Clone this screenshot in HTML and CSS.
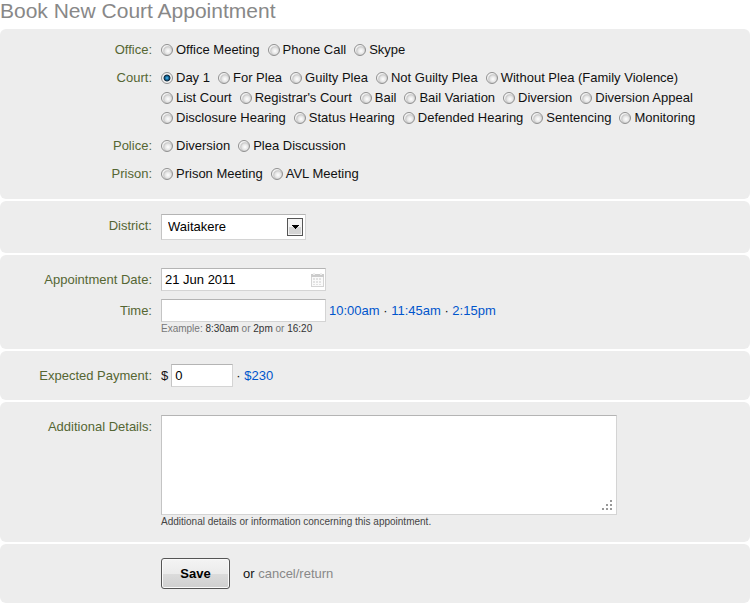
FILE: index.html
```
<!DOCTYPE html>
<html lang="en">

<head>
    <meta charset="utf-8">
    <title>Book New Court Appointment</title>
    <meta name="viewport" content="width=device-width, initial-scale=1">
    <link rel="stylesheet" href="styles.css">
</head>

<body>
    <h1>Book New Court Appointment</h1>
    <form class="booking">
        <div class="panel panel-types">
            <div class="row" role="group" aria-labelledby="lbl-office">
                <span class="label" id="lbl-office">Office:</span>
                <div class="options">
                    <label><input type="radio" name="type">Office Meeting</label>
                    <label><input type="radio" name="type">Phone Call</label>
                    <label><input type="radio" name="type">Skype</label>
                </div>
            </div>
            <div class="row" role="group" aria-labelledby="lbl-court">
                <span class="label" id="lbl-court">Court:</span>
                <div class="options">
                    <label><input type="radio" name="type" checked>Day 1</label>
                    <label><input type="radio" name="type">For Plea</label>
                    <label><input type="radio" name="type">Guilty Plea</label>
                    <label><input type="radio" name="type">Not Guilty Plea</label>
                    <label><input type="radio" name="type">Without Plea (Family Violence)</label>
                    <label><input type="radio" name="type">List Court</label>
                    <label><input type="radio" name="type">Registrar's Court</label>
                    <label><input type="radio" name="type">Bail</label>
                    <label><input type="radio" name="type">Bail Variation</label>
                    <label><input type="radio" name="type">Diversion</label>
                    <label><input type="radio" name="type">Diversion Appeal</label>
                    <label><input type="radio" name="type">Disclosure Hearing</label>
                    <label><input type="radio" name="type">Status Hearing</label>
                    <label><input type="radio" name="type">Defended Hearing</label>
                    <label><input type="radio" name="type">Sentencing</label>
                    <label><input type="radio" name="type">Monitoring</label>
                </div>
            </div>
            <div class="row" role="group" aria-labelledby="lbl-police">
                <span class="label" id="lbl-police">Police:</span>
                <div class="options">
                    <label><input type="radio" name="type">Diversion</label>
                    <label><input type="radio" name="type">Plea Discussion</label>
                </div>
            </div>
            <div class="row" role="group" aria-labelledby="lbl-prison">
                <span class="label" id="lbl-prison">Prison:</span>
                <div class="options">
                    <label><input type="radio" name="type">Prison Meeting</label>
                    <label><input type="radio" name="type">AVL Meeting</label>
                </div>
            </div>
        </div>

        <div class="panel">
            <div class="row">
                <label class="label" for="district">District:</label>
                <div class="field select-box">
                    <select id="district">
                        <option>Waitakere</option>
                    </select>
                    <svg class="arrow" width="16" height="18" viewBox="0 0 16 18" aria-hidden="true">
                        <rect x="0.5" y="0.5" width="15" height="17" fill="#f4f4f4" stroke="#555" />
                        <rect x="2" y="9" width="12" height="7" fill="#d4d4d4" />
                        <path d="M5 7h7v1h-1v1h-1v1H9v1H8v-1H7V9H6V8H5z" fill="#000" />
                    </svg>
                </div>
            </div>
        </div>

        <div class="panel">
            <div class="row">
                <label class="label" for="date">Appointment Date:</label>
                <div class="field date-box">
                    <input class="text" type="text" id="date" value="21 Jun 2011">
                    <svg class="calendar" width="13" height="14" viewBox="0 0 13 14" aria-hidden="true">
                        <rect x="0.5" y="1.5" width="12" height="12" fill="#fafafa" stroke="#d4d4d4" />
                        <path d="M0 1h13v3H0z" fill="#ccc" />
                        <path d="M2 0h2v2H2zM9 0h2v2H9z" fill="#eee" />
                        <path d="M2 5h2v2H2zM5 5h2v2H5zM8 5h2v2H8zM2 8h2v2H2zM5 8h2v2H5zM8 8h2v2H8zM2 11h2v1H2zM5 11h2v1H5zM8 11h2v1H8z" fill="#e2e2e2" />
                    </svg>
                </div>
            </div>
            <div class="row">
                <label class="label" for="time">Time:</label>
                <div class="field">
                    <div class="line">
                        <input class="text" type="text" id="time">
                        <span class="quick"><a href="#">10:00am</a> · <a href="#">11:45am</a> · <a href="#">2:15pm</a></span>
                    </div>
                    <p class="hint example">Example: <b>8:30am</b> or <b>2pm</b> or <b>16:20</b></p>
                </div>
            </div>
        </div>

        <div class="panel">
            <div class="row">
                <label class="label" for="payment">Expected Payment:</label>
                <div class="field line">
                    <span>$</span>
                    <input class="text amount" type="text" id="payment" value="0">
                    <span class="quick">· <a href="#">$230</a></span>
                </div>
            </div>
        </div>

        <div class="panel">
            <div class="row">
                <label class="label" for="details">Additional Details:</label>
                <div class="field details">
                    <div class="details-box">
                        <textarea id="details"></textarea>
                        <svg class="grip" width="10" height="10" viewBox="0 0 10 10" aria-hidden="true">
                            <path d="M8 0h2v2H8zM4 4h2v2H4zM8 4h2v2H8zM0 8h2v2H0zM4 8h2v2H4zM8 8h2v2H8z" fill="#999" />
                        </svg>
                    </div>
                    <p class="hint">Additional details or information concerning this appointment.</p>
                </div>
            </div>
        </div>

        <div class="panel actions">
            <button type="button">Save</button>
            <span>or <a class="cancel" href="#">cancel/return</a></span>
        </div>
    </form>
</body>

</html>
```
FILE: styles.css
```
body {
    margin: 0;
    background: #fff;
    color: #111;
    font-family: "Liberation Sans", Arial, sans-serif;
    font-size: 13px;
    line-height: 20px;
}

h1 {
    margin: 0;
    padding-bottom: 7px;
    color: #888;
    font-size: 21px;
    font-weight: normal;
    line-height: 22px;
}

a {
    color: #0055cc;
    text-decoration: none;
}

.booking {
    display: flex;
    flex-direction: column;
    gap: 2px;
}

.panel {
    display: flex;
    flex-direction: column;
    gap: 8px;
    padding: 13px 0;
    background: #ededed;
    border-radius: 6px;
}

.panel-types {
    padding: 11px 0 15px;
}

.row {
    display: flex;
    gap: 9px;
}

.label {
    flex: none;
    width: 152px;
    color: #556633;
    text-align: right;
}

.field {
    position: relative;
}

.panel:not(.panel-types) .label {
    padding-top: 2px;
}

.options {
    display: flex;
    flex-wrap: wrap;
    gap: 0 8px;
    max-width: 550px;
}

.options label {
    display: flex;
    align-items: center;
    gap: 3px;
}

/* radio buttons */
input[type="radio"] {
    appearance: none;
    width: 12px;
    height: 12px;
    margin: 0;
    border: 1px solid #909090;
    border-radius: 50%;
    background: radial-gradient(circle at 60% 60%, #fff 0, #e4e4e4 35%, #cacaca 50%, #f4f4f4 65%);
}

input[type="radio"]:checked {
    background: radial-gradient(circle, #5cc4f4 0, #1672a8 22%, #12283a 42%, #f4f4f4 55%);
}

.text, select, textarea {
    box-sizing: border-box;
    margin: 0;
    border: 1px solid #d4d4d4;
    border-top-color: #b4b4b4;
    border-left-color: #c4c4c4;
    border-radius: 0;
    background: #fff;
    color: #000;
    font: inherit;
}

.text {
    display: block;
    width: 165px;
    height: 23px;
    padding: 0 3px;
}

.amount {
    width: 62px;
}

.line {
    display: flex;
    align-items: center;
    gap: 3px;
}

.select-box select {
    display: block;
    appearance: none;
    width: 145px;
    height: 26px;
    padding: 0 24px 0 6px;
}

.arrow {
    position: absolute;
    top: 4px;
    right: 3px;
    pointer-events: none;
}

.calendar {
    position: absolute;
    top: 5px;
    right: 2px;
}

.hint {
    margin: 0;
    color: #444;
    font-size: 10px;
    line-height: 14px;
}

.example {
    color: #777;
}

.hint b {
    color: #333;
    font-weight: normal;
}

.details {
    flex: 0 1 456px;
}

.details-box {
    position: relative;
}

textarea {
    display: block;
    width: 100%;
    height: 100px;
    padding: 4px;
    resize: none;
}

.grip {
    position: absolute;
    right: 5px;
    bottom: 5px;
}

/* lines up with the field column */
.actions {
    flex-direction: row;
    align-items: center;
    gap: 13px;
    padding: 14px 0 14px 161px;
}

button {
    width: 69px;
    height: 31px;
    border: 1px solid #555;
    border-radius: 3px;
    background: linear-gradient(#f4f4f4, #ebebeb 50%, #dcdcdc 50%, #cfcfcf);
    box-shadow: inset 0 0 0 1px #fafafa;
    font: bold 13px "Liberation Sans", Arial, sans-serif;
    cursor: pointer;
}

.cancel {
    color: #888;
}
```
